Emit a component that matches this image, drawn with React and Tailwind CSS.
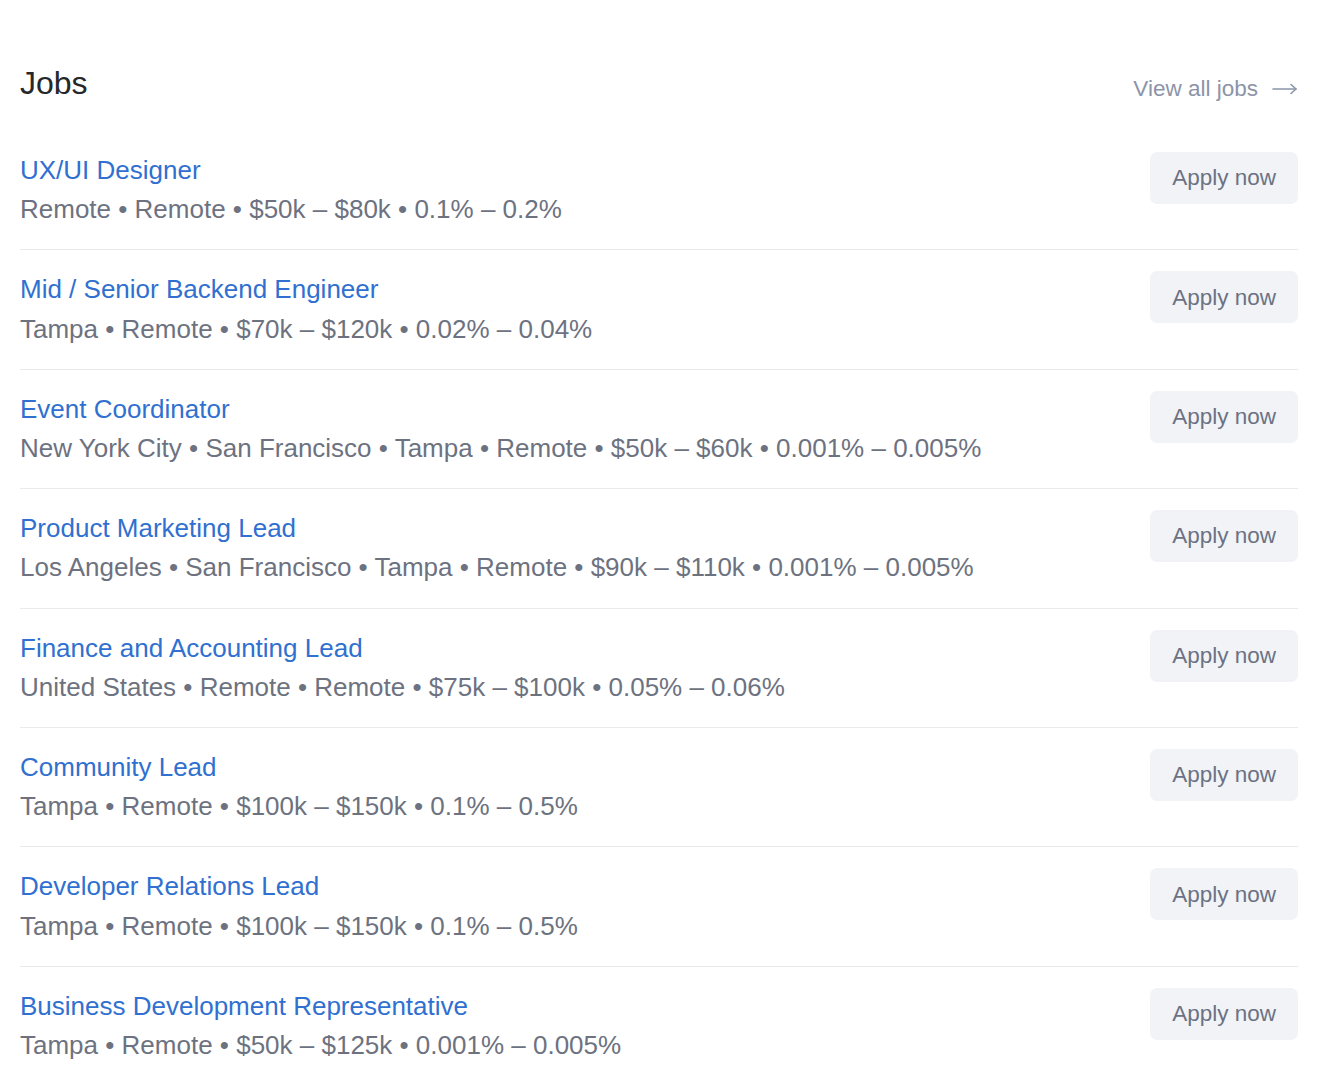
import React from 'react';

const jobs = [
  { title: 'UX/UI Designer', meta: 'Remote • Remote • $50k – $80k • 0.1% – 0.2%' },
  { title: 'Mid / Senior Backend Engineer', meta: 'Tampa • Remote • $70k – $120k • 0.02% – 0.04%' },
  { title: 'Event Coordinator', meta: 'New York City • San Francisco • Tampa • Remote • $50k – $60k • 0.001% – 0.005%' },
  { title: 'Product Marketing Lead', meta: 'Los Angeles • San Francisco • Tampa • Remote • $90k – $110k • 0.001% – 0.005%' },
  { title: 'Finance and Accounting Lead', meta: 'United States • Remote • Remote • $75k – $100k • 0.05% – 0.06%' },
  { title: 'Community Lead', meta: 'Tampa • Remote • $100k – $150k • 0.1% – 0.5%' },
  { title: 'Developer Relations Lead', meta: 'Tampa • Remote • $100k – $150k • 0.1% – 0.5%' },
  { title: 'Business Development Representative', meta: 'Tampa • Remote • $50k – $125k • 0.001% – 0.005%' },
];

export default function App() {
  return (
    <div className="min-h-screen bg-white pl-5 pr-6 pt-[63px]" style={{ fontFamily: "'Liberation Sans', Arial, sans-serif" }}>
      <header className="flex items-end justify-between pb-[28px]">
        <h2 className="text-[32px] leading-[40px] text-[#25272b]">Jobs</h2>
        <a href="#" className="flex items-center gap-[14px] pb-[1px] text-[22.5px] leading-[32px] text-[#8b94a8] translate-y-[3px]">
          View all jobs
          <svg width="26" height="12" viewBox="0 0 26 12" fill="none" stroke="#8b94a8" strokeWidth="1.6" strokeLinecap="round" strokeLinejoin="round">
            <path d="M1 6h23" />
            <path d="M19 1.5l5 4.5-5 4.5" />
          </svg>
        </a>
      </header>

      <ul>
        {jobs.map((job, i) => (
          <li key={job.title}
            className={`flex items-start justify-between py-[20px] ${i < jobs.length - 1 ? 'border-b border-[#e9eaee]' : ''}`}>
            <div className="flex flex-col">
              <a href="#" className="text-[26px] leading-[39.2px] text-[#3070d0]">{job.title}</a>
              <p className="text-[26px] leading-[39.2px] text-[#6d7280]">{job.meta}</p>
            </div>
            <button className="mt-[1px] h-[52px] px-[22px] rounded-[7px] bg-[#f2f3f6] text-[22.5px] text-[#6b7284]">
              Apply now
            </button>
          </li>
        ))}
      </ul>
    </div>
  );
}
